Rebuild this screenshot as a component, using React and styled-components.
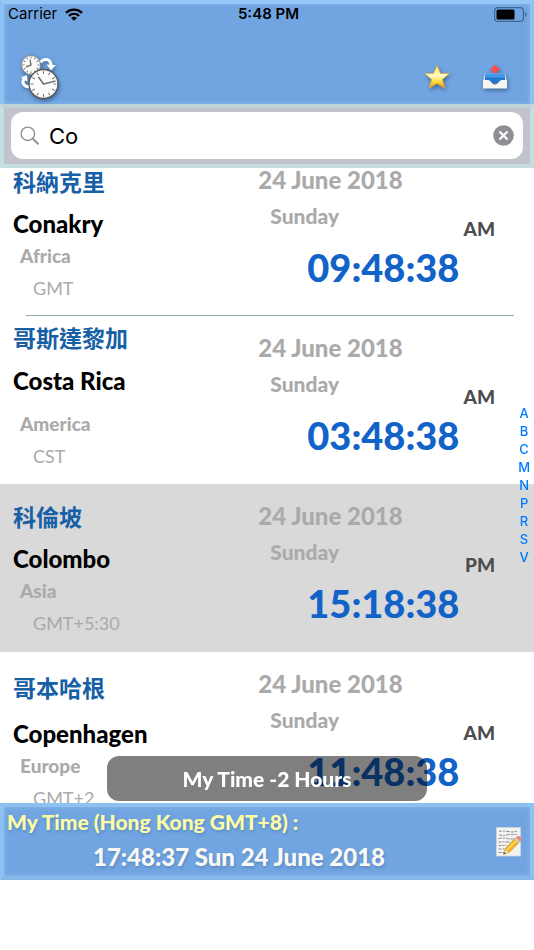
import {useEffect, useRef, useState} from 'react'
import styled, {createGlobalStyle} from 'styled-components'

const cities = [
    {id: 1, zh: '科納克里', name: 'Conakry', region: 'Africa', zone: 'GMT', time: '09:48:38', half: 'AM', top: 17, gap: 11, after: 0, line: true},
    {id: 2, zh: '哥斯達黎加', name: 'Costa Rica', region: 'America', zone: 'CST', time: '03:48:38', half: 'AM', top: 5, gap: 12, after: 11},
    {id: 3, zh: '科倫坡', name: 'Colombo', region: 'Asia', zone: 'GMT+5:30', time: '15:18:38', half: 'PM', top: 16, gap: 11, after: 0, selected: true},
    {id: 4, zh: '哥本哈根', name: 'Copenhagen', region: 'Europe', zone: 'GMT+2', time: '11:48:38', half: 'AM', top: 19, gap: 15, after: 0},
]

const letters = ['A', 'B', 'C', 'M', 'N', 'P', 'R', 'S', 'V']

function WifiIcon(){
    return(
        <svg width="18" height="13" viewBox="0 0 18 13" fill="none" stroke="#000" strokeWidth="2.3">
            <path d="M1 4.8C5.5.6 12.5.6 17 4.8" />
            <path d="M3.9 7.8c3-2.7 7.2-2.7 10.2 0" />
            <path d="M9 12.8 6 9.9c1.7-1.5 4.3-1.5 6 0Z" fill="#000" stroke="none" />
        </svg>
    )
}

function BatteryIcon(){
    return(
        <svg width="33" height="15" viewBox="0 0 33 15">
            <rect x=".6" y=".6" width="28.8" height="13.8" rx="3.5" fill="none" stroke="#3f6590" strokeWidth="1.2" />
            <rect x="2.5" y="2.5" width="18" height="10" rx="1.5" />
            <path d="M31 5v5c2-.8 2-4.2 0-5Z" fill="#3f6590" />
        </svg>
    )
}

function Ticks({cx, cy, r, len}){
    const ticks = []
    for(let i = 0; i < 12; i++){
        ticks.push(<path key={i} d={`M${cx} ${cy - r}v${len}`} transform={`rotate(${i * 30} ${cx} ${cy})`} />)
    }
    return <g stroke="#777" strokeWidth="1">{ticks}</g>
}

function ClocksIcon(){
    return(
        <svg width="40" height="48" viewBox="0 0 40 48" fill="none">
            <path d="M20.500 10.500C23.500 6 31 6 31 14" stroke="#fff" strokeWidth="3" />
            <path d="m26.500 12.500 9.300.5-4.800 5.500Z" fill="#fff" />
            <path d="M10 34.500C4 35.500 1.500 30.500 4 27" stroke="#fff" strokeWidth="3" />
            <path d="m.8 25.500 6.200-2.500.4 6.800Z" fill="#fff" />
            <circle cx="11" cy="13" r="9.500" fill="#fafafa" stroke="#8b8b8b" strokeWidth="1" />
            <Ticks cx={11} cy={13} r={8.5} len={2} />
            <path d="m10 7.500 1 5.500-5 2" stroke="#777" strokeWidth="1.400" />
            <circle cx="23.500" cy="32" r="14.500" fill="#fcfcfc" stroke="#555" strokeWidth="1.300" />
            <Ticks cx={23.5} cy={32} r={13} len={3} />
            <path d="m18.500 25 5 7 12-3" stroke="#777" strokeWidth="1.700" />
        </svg>
    )
}

function StarIcon(){
    return(
        <svg width="26" height="26" viewBox="0 0 26 26">
            <defs>
                <linearGradient id="gold" x1="0" y1="0" x2="0" y2="1">
                    <stop offset="0" stopColor="#ffe45c" />
                    <stop offset=".45" stopColor="#fffbc8" />
                    <stop offset=".7" stopColor="#ffdc3c" />
                    <stop offset="1" stopColor="#e79208" />
                </linearGradient>
            </defs>
            <path d="m13 1.500 3.500 8h8.800l-6.900 6 2.500 8.800L13 19.500l-7.900 4.800 2.500-8.800-6.900-6h8.800Z" fill="url(#gold)" stroke="#e3ad30" strokeWidth=".7" strokeLinejoin="round" />
        </svg>
    )
}

function OutboxIcon(){
    return(
        <svg width="26" height="26" viewBox="0 0 26 26">
            <path d="M3 9h20l2 9H1Z" fill="#e9edf0" />
            <path d="M3.500 9.500h19L23.500 19h-21Z" fill="#2478cc" />
            <path d="M3.500 9.500h19l.4 4H3.100Z" fill="#4497e8" />
            <path d="M1 16h5c3 0 3.500 4.500 7 4.500s4-4.500 7-4.500h5v8.500H1Z" fill="#f6f5f2" />
            <path d="m13 .8 5 4.700-1.500 1.500h-1.300V9h-4.400V7H9.500L8 5.500Z" fill="#f9504b" />
        </svg>
    )
}

function MemoIcon(){
    return(
        <svg width="26" height="30" viewBox="0 0 26 30">
            <path d="M.5.500h24v28.500H.5Z" fill="#f3f3f1" stroke="#d2d4d6" strokeWidth=".8" />
            <g stroke="#8a8a8a" strokeWidth="1" strokeDasharray="3 1 2 1 4 1" fill="none">
                <path d="M3 4.500q4-1 9 0t10-.5" />
                <path d="M3 8q5 .8 9-.2t10 .2" />
                <path d="M2.500 11.500q5-1 9 0t7 0" />
                <path d="M2.500 15h12" />
                <path d="M2.500 18.500h8" />
                <path d="M2.500 22h6" />
                <path d="M2.500 25.500h5" />
            </g>
            <path d="m9 22 11-11.500 4 4L13 25.500l-5.500 1.700Z" fill="#f6b51e" stroke="#b67a10" strokeWidth=".6" />
            <path d="m11 23 11-11" stroke="#ffe06a" strokeWidth="1.500" />
            <path d="m9 22 4 3.500-5.500 1.700Z" fill="#f0d3a0" />
            <path d="m7.500 27.200.6-2 1.500 1.300Z" fill="#222" />
            <path d="m18.500 12 1.500-1.500 4 4-1.500 1.500Z" fill="#c9ccd0" />
            <path d="m20 10.500 1.500-1.300c2-1 5.200 1.800 4 4L24 14.500Z" fill="#ee8287" />
        </svg>
    )
}

function CityRow({city}){
    return(
        <Row $selected={city.selected} $line={city.line}>
            <Names $top={city.top}>
                <ChineseName>{city.zh}</ChineseName>
                <CityName $gap={city.gap} $after={city.after}>{city.name}</CityName>
                <Region>{city.region}</Region>
                <Zone>{city.zone}</Zone>
            </Names>
            <Times>
                <DateText>24 June 2018</DateText>
                <DayLine>
                    <Day>Sunday</Day>
                    <Half>{city.half}</Half>
                </DayLine>
                <Clock>{city.time}</Clock>
            </Times>
        </Row>
    )
}

function App(){
    const [search, setSearch] = useState('Co')
    const listRef = useRef(null)

    // the list opens slightly scrolled under the search bar
    useEffect(() => {
        listRef.current.scrollTop = 20
    }, [])

    return(
        <Page>
            <GlobalStyle />
            <Header>
                <StatusBar>
                    <Carrier>Carrier <WifiIcon /></Carrier>
                    <StatusTime>5:48 PM</StatusTime>
                    <Battery><BatteryIcon /></Battery>
                </StatusBar>
                <Toolbar>
                    <IconButton aria-label="Convert time"><ClocksIcon /></IconButton>
                    <Actions>
                        <IconButton aria-label="Favourites"><StarIcon /></IconButton>
                        <IconButton aria-label="Share"><OutboxIcon /></IconButton>
                    </Actions>
                </Toolbar>
            </Header>
            <SearchBar>
                <SearchField>
                    <svg width="20" height="20" viewBox="0 0 20 20" fill="none" stroke="#8e8e93">
                        <circle cx="7.800" cy="7.800" r="6.700" strokeWidth="1.300" />
                        <path d="m12.800 12.800 5.700 5.500" strokeWidth="2" />
                    </svg>
                    <SearchInput
                    aria-label="Search"
                    value={search}
                    onChange={(e) => {setSearch(e.target.value)}} />
                    <IconButton aria-label="Clear" onClick={() => {setSearch('')}}>
                        <svg width="21" height="21" viewBox="0 0 21 21">
                            <circle cx="10.500" cy="10.500" r="10.300" fill="#8e8e93" />
                            <path d="m6.500 6.500 8 8m0-8-8 8" stroke="#fff" strokeWidth="2.200" />
                        </svg>
                    </IconButton>
                </SearchField>
            </SearchBar>
            <ListArea>
                <List ref={listRef}>
                    {cities.map((city) => <CityRow key={city.id} city={city} />)}
                </List>
                <LetterIndex>
                    {letters.map((letter) => <a key={letter} href={`#${letter}`}>{letter}</a>)}
                </LetterIndex>
                <Toast>My Time -2 Hours</Toast>
            </ListArea>
            <Footer>
                <MyTime>
                    <MyZone>My Time (Hong Kong GMT+8) :</MyZone>
                    <MyClock>17:48:37 Sun 24 June 2018</MyClock>
                </MyTime>
                <IconButton aria-label="Edit"><MemoIcon /></IconButton>
            </Footer>
        </Page>
    )
}

export default App

const GlobalStyle = createGlobalStyle`
*{
    box-sizing: border-box;
}

body{
    margin: 0;
    background: #fff;
    font-family: Lato, 'Noto Sans CJK TC', sans-serif;
}
`

const Page = styled.div`
display: flex;
flex-direction: column;
height: 100vh;
padding-bottom: 70px;
`

const Header = styled.header`
background: #71a5e1;
border: 4px solid #8dc1f2;
border-top-color: #95c8f8;
border-bottom: none;
box-shadow: inset 0 0 5px #86b8ee;
`

const StatusBar = styled.div`
display: grid;
grid-template-columns: 1fr auto 1fr;
align-items: center;
height: 20px;
padding: 0 3px 0 4px;
font-family: Inter, sans-serif;
font-size: 15px;
line-height: 20px;
`

const Carrier = styled.span`
display: flex;
align-items: center;
gap: 8px;
`

const StatusTime = styled.span`
padding-left: 2px;
font-weight: 600;
`

const Battery = styled.span`
display: flex;
justify-content: flex-end;
`

const Toolbar = styled.div`
display: flex;
align-items: center;
justify-content: space-between;
height: 80px;
padding: 24px 22px 0 16px;
`

const Actions = styled.div`
display: flex;
gap: 32px;
padding-top: 2px;
`

const IconButton = styled.button`
display: flex;
padding: 0;
border: none;
background: none;
cursor: pointer;

header & svg{
    filter: drop-shadow(1px 2px 2px rgba(30, 60, 100, 0.6));
}
`

const SearchBar = styled.div`
padding: 4px 7px 5px;
background: #c1c4cc;
border: 4px solid #c5dfe1;
border-top-color: #bfd2d8;
`

const SearchField = styled.div`
display: flex;
align-items: center;
gap: 9px;
height: 47px;
padding: 0 9px;
background: #fff;
border-radius: 12px;
`

const SearchInput = styled.input`
flex: 1;
min-width: 0;
padding: 0;
border: none;
outline: none;
background: none;
color: #000;
font-family: Inter, sans-serif;
font-size: 22px;
`

const ListArea = styled.main`
position: relative;
flex: 1;
min-height: 0;
`

const List = styled.div`
height: 100%;
overflow-y: auto;
scrollbar-width: none;
`

const Row = styled.section`
display: grid;
grid-template-columns: 48% 1fr;
height: 168px;
background: ${(props) => props.$selected ? '#d9d9d9' : '#fff'};

&::after{
    content: '';
    grid-column: 1 / -1;
    align-self: end;
    height: 1px;
    margin: 0 20px 0 26px;
    background: ${(props) => props.$line ? '#8fb0b0' : 'transparent'};
}
`

const Names = styled.div`
display: flex;
flex-direction: column;
height: 167px;
padding: ${(props) => props.$top}px 0 0 13px;
line-height: 32px;
white-space: nowrap;
`

const ChineseName = styled.span`
color: #1760a6;
font-family: 'Noto Sans CJK TC', sans-serif;
font-size: 23px;
font-weight: 700;
`

const CityName = styled.span`
margin: ${(props) => props.$gap}px 0 ${(props) => props.$after}px;
color: #000;
font-size: 24px;
font-weight: 900;
`

const Region = styled.span`
padding-left: 7px;
color: #aaa;
font-size: 19px;
font-weight: 900;
`

const Zone = styled.span`
padding-left: 20px;
color: #aaa;
font-size: 18px;
font-weight: 400;
`

const Times = styled.div`
display: flex;
flex-direction: column;
height: 167px;
padding: 16px 39px 0 2px;
color: #aaa;
font-weight: 900;
line-height: 32px;
`

const DateText = styled.span`
font-size: 24px;
`

const DayLine = styled.div`
display: flex;
align-items: flex-end;
justify-content: space-between;
height: 49px;
padding-left: 12px;
`

const Day = styled.span`
align-self: flex-start;
padding-top: 4px;
font-size: 21px;
`

const Half = styled.span`
color: #4d4d4d;
font-size: 19px;
`

const Clock = styled.span`
padding: 2px 0 0 49px;
color: #1263c8;
font-size: 38px;
line-height: 40px;
`

const LetterIndex = styled.nav`
position: absolute;
top: 50%;
right: 4px;
display: flex;
flex-direction: column;
padding-bottom: 2px;
transform: translateY(-50%);
font-family: Inter, sans-serif;
font-size: 13px;
font-weight: 500;
line-height: 18px;
text-align: center;

a{
    color: #007aff;
    text-decoration: none;
}
`

const Toast = styled.div`
position: absolute;
bottom: 2px;
left: 20%;
right: 20%;
background: rgba(0, 0, 0, 0.5);
border-radius: 12px;
color: #fff;
font-size: 21px;
font-weight: 900;
line-height: 45px;
text-align: center;
`

const Footer = styled.footer`
display: flex;
align-items: center;
justify-content: space-between;
height: 77px;
padding: 0 8px 0 3px;
background: #71a5e1;
border: 4px solid #8dc1f2;
border-bottom-color: #86b9e9;
box-shadow: inset 0 0 5px #86b8ee;
`

const MyTime = styled.div`
display: flex;
flex-direction: column;
padding-bottom: 5px;
font-weight: 900;
line-height: 35px;
`

const MyZone = styled.span`
color: #fdfda6;
font-size: 21px;
text-shadow: 1px 2px 3px rgba(40, 80, 130, 0.3);
`

const MyClock = styled.span`
padding-left: 86px;
color: #fbf9f4;
font-size: 24px;
text-shadow: 1px 2px 3px rgba(40, 80, 130, 0.3);
`
